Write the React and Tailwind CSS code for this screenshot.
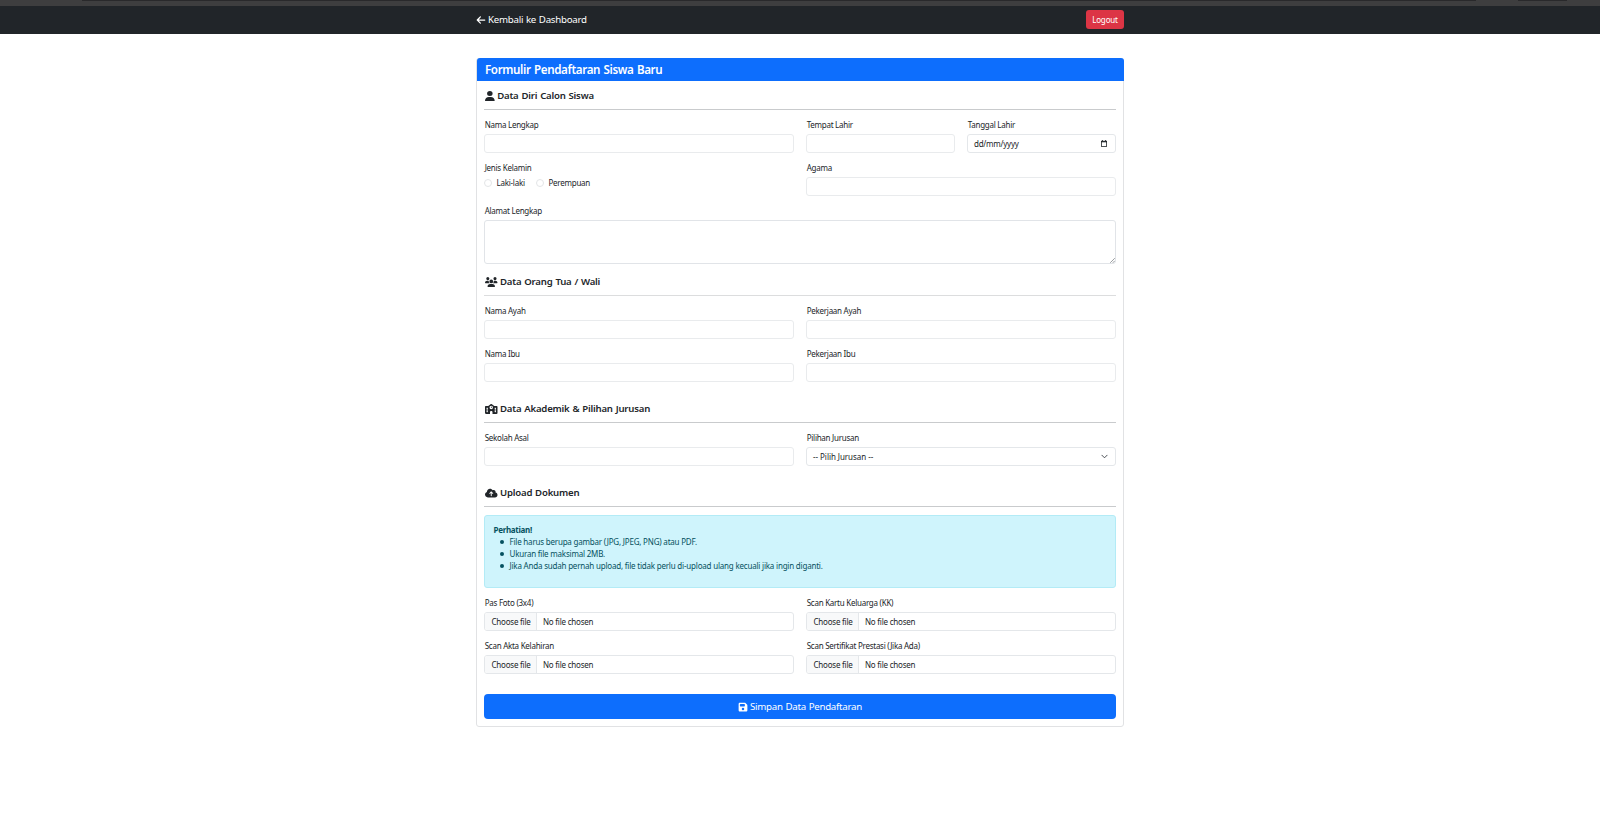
import React from "react";
import { FaArrowLeft, FaUser, FaUsers, FaSchool, FaCloudArrowUp, FaFloppyDisk } from "react-icons/fa6";

const control = "block w-full h-[19px] rounded-[3px] border border-[#e9ebed] bg-white";

function Field({ label, children, className = "" }) {
  return (
    <div className={`min-w-0 ${className}`}>
      <div className="mb-px h-[17px] pl-[0.7px] text-[8px] leading-[18px] whitespace-nowrap tracking-[-0.26px]">{label}</div>
      {children}
    </div>
  );
}

function TextField({ label, className }) {
  return (
    <Field label={label} className={className}>
      <input type="text" aria-label={label} className={control} />
    </Field>
  );
}

function FileField({ label }) {
  return (
    <Field label={label}>
      <div className="flex h-[19px] w-full items-stretch overflow-hidden rounded-[3px] border border-[#e4e7ea] bg-white text-[8px] leading-[18px] tracking-[-0.22px] whitespace-nowrap">
        <span className="w-[52px] border-r border-[#e4e7ea] bg-[#f8f9fa] pl-[6.5px]">Choose file</span>
        <span className="pl-[6px]">No file chosen</span>
      </div>
    </Field>
  );
}

function Section({ icon, title, line = "border-[#c9cbcd]", className = "" }) {
  return (
    <h5 className={`flex h-[22px] items-start gap-[2.5px] border-b pl-px text-[9.6px] leading-[16px] font-semibold tracking-[-0.2px] [word-spacing:0.6px] whitespace-nowrap ${line} ${className}`}>
      <span className="flex h-[15px] items-center">{icon}</span>
      <span>{title}</span>
    </h5>
  );
}

function Radio({ label, className = "" }) {
  return (
    <label className={`flex items-center gap-[4.5px] ${className}`}>
      <span className="size-2 rounded-full border border-[#e3e5e7]" />
      <span>{label}</span>
    </label>
  );
}

export default function App() {
  return (
    <div className="min-h-[816px] bg-white font-['Noto_Sans','Open_Sans',sans-serif] text-[#212529]">
      <div className="flex h-[6px] items-start bg-[#3e3e3f]">
        <div className="ml-[82px] h-px w-[1394px] bg-[#29292b]" />
        <div className="ml-[42px] h-px w-[49px] bg-[#29292b]" />
      </div>
      <nav className="h-7 bg-[#212529]">
        <div className="mx-auto flex h-[27px] w-[648px] items-center justify-between">
          <a className="flex items-center gap-[2px] text-[9.7px] leading-4 tracking-[-0.25px] [word-spacing:0.5px] whitespace-nowrap text-white">
            <FaArrowLeft className="text-[10px]" />
            <span>Kembali ke Dashboard</span>
          </a>
          <button className="h-[19px] w-[38px] rounded-[3px] bg-[#dc3545] text-[8px] leading-[20px] tracking-[-0.15px] text-white">Logout</button>
        </div>
      </nav>

      <main className="mx-auto mt-6 h-[669px] w-[648px] rounded-[3px] border border-[#e1e2e4]">
        <h4 className="-mt-px -mr-px h-[23px] rounded-t-[3px] bg-[#0d6efd] pl-[8px] text-[11.6px] leading-[24px] font-semibold tracking-[-0.37px] [word-spacing:0.8px] whitespace-nowrap text-white">
          Formulir Pendaftaran Siswa Baru
        </h4>
        <form className="px-[7px]">
          <Section icon={<FaUser preserveAspectRatio="none" className="h-[10px] w-[9.7px]" />} title="Data Diri Calon Siswa" className="mt-[7px]" />
          <div className="mt-[6px] grid grid-cols-4 gap-x-3 gap-y-[6px]">
            <TextField label="Nama Lengkap" className="col-span-2" />
            <TextField label="Tempat Lahir" />
            <Field label="Tanggal Lahir">
              <div className="flex h-[19px] items-center justify-between rounded-[3px] border border-[#e4e7ea] pr-[8px] pl-[6px] text-[8px] leading-4 tracking-[-0.25px]">
                <span>dd/mm/yyyy</span>
                <svg className="h-[7px] w-[6px]" viewBox="0 0 6 7" fill="none" stroke="#212529">
                  <rect x="0.4" y="1.2" width="5.2" height="5.2" strokeWidth="0.8" />
                  <path d="M0 1.7H6" strokeWidth="1.2" />
                  <path d="M1.5 0V1M4.5 0V1" strokeWidth="0.8" />
                </svg>
              </div>
            </Field>
            <Field label="Jenis Kelamin" className="col-span-2">
              <div className="flex items-center pt-px text-[8px] leading-[10px] tracking-[-0.25px] whitespace-nowrap">
                <Radio label="Laki-laki" className="w-[52px]" />
                <Radio label="Perempuan" />
              </div>
            </Field>
            <TextField label="Agama" className="col-span-2" />
            <Field label="Alamat Lengkap" className="col-span-4">
              <div className="relative">
                <textarea aria-label="Alamat Lengkap" className="block h-11 w-full resize-none rounded-[3px] border border-[#e1e4e8]" />
                <svg className="absolute right-px bottom-px size-[5px]" viewBox="0 0 5 5" fill="none" stroke="#6f7377" strokeWidth="0.7">
                  <path d="M0.2 4.8L4.8 0.2M2.8 4.8L4.8 2.8" />
                </svg>
              </div>
            </Field>
          </div>

          <Section icon={<FaUsers className="h-[10px] w-[12.5px]" />} title="Data Orang Tua / Wali" line="border-[#dcddde]" className="mt-[10px]" />
          <div className="mt-[6px] grid grid-cols-2 gap-x-3 gap-y-[6px]">
            <TextField label="Nama Ayah" />
            <TextField label="Pekerjaan Ayah" />
            <TextField label="Nama Ibu" />
            <TextField label="Pekerjaan Ibu" />
          </div>

          <Section icon={<FaSchool className="h-[10px] w-[12.5px]" />} title="Data Akademik & Pilihan Jurusan" className="mt-[19px]" />
          <div className="mt-[6px] grid grid-cols-2 gap-x-3">
            <TextField label="Sekolah Asal" />
            <Field label="Pilihan Jurusan">
              <div className="flex h-[19px] items-center justify-between rounded-[3px] border border-[#e4e7ea] pr-[7px] pl-[6px] text-[8px] leading-4 tracking-[-0.05px]">
                <span>-- Pilih Jurusan --</span>
                <svg className="h-[7px] w-[7px]" viewBox="0 0 16 16" fill="none" stroke="#343a40" strokeWidth="2" strokeLinecap="round" strokeLinejoin="round">
                  <path d="m2 5 6 6 6-6" />
                </svg>
              </div>
            </Field>
          </div>

          <Section icon={<FaCloudArrowUp className="h-[10px] w-[12.5px]" />} title="Upload Dokumen" className="mt-[19px]" />
          <div className="mt-2 h-[73px] rounded-[3px] border border-[#b3ebf6] bg-[#cff4fc] px-[8.5px] pt-2 text-[8px] leading-3 tracking-[-0.2px] whitespace-nowrap text-[#055160]">
            <strong className="block font-bold tracking-[-0.3px]">Perhatian!</strong>
            <ul>
              {[
                "File harus berupa gambar (JPG, JPEG, PNG) atau PDF.",
                "Ukuran file maksimal 2MB.",
                "Jika Anda sudah pernah upload, file tidak perlu di-upload ulang kecuali jika ingin diganti.",
              ].map((item) => (
                <li key={item} className="flex items-center pl-[6px]">
                  <span className="mr-[6px] size-[4px] rounded-full bg-[#055160]" />
                  {item}
                </li>
              ))}
            </ul>
          </div>
          <div className="mt-[6px] grid grid-cols-2 gap-x-3 gap-y-[6px]">
            <FileField label="Pas Foto (3x4)" />
            <FileField label="Scan Kartu Keluarga (KK)" />
            <FileField label="Scan Akta Kelahiran" />
            <FileField label="Scan Sertifikat Prestasi (Jika Ada)" />
          </div>
          <button type="button" className="mt-5 flex h-[25px] w-full items-center justify-center gap-[2px] rounded-[4px] bg-[#0d6efd] text-[9.7px] leading-4 tracking-[-0.26px] [word-spacing:0.5px] whitespace-nowrap text-white">
            <FaFloppyDisk className="text-[10px]" />
            <span>Simpan Data Pendaftaran</span>
          </button>
        </form>
      </main>
    </div>
  );
}
